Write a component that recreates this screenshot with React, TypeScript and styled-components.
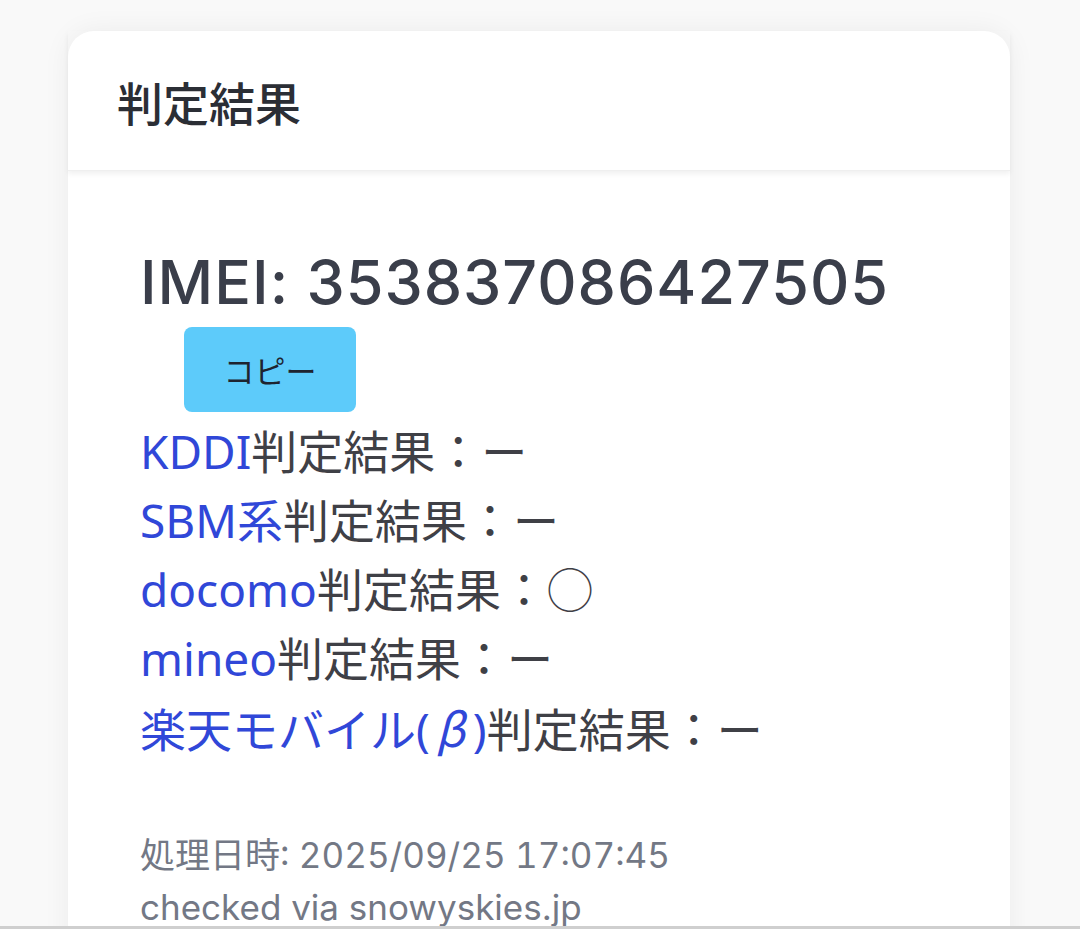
import React from 'react';
import styled, { createGlobalStyle } from 'styled-components';

interface Carrier {
  name: React.ReactNode;
  key: string;
  result: string;
}

const Greek = styled.span`
  font-family: "Noto Sans CJK JP", sans-serif;
  font-style: italic;
  padding: 0 8px 0 6px;
`;

const carriers: Carrier[] = [
  { key: 'kddi', name: 'KDDI', result: 'ー' },
  { key: 'sbm', name: 'SBM系', result: 'ー' },
  { key: 'docomo', name: 'docomo', result: '◯' },
  { key: 'mineo', name: 'mineo', result: 'ー' },
  {
    key: 'rakuten',
    name: (
      <>
        楽天モバイル(<Greek>β</Greek>)
      </>
    ),
    result: 'ー',
  },
];

const GlobalStyle = createGlobalStyle`
  html, body {
    margin: 0;
    padding: 0;
    background: #f9f9f9;
    font-family: "Noto Sans", "Noto Sans CJK JP", sans-serif;
  }
`;

const Page = styled.div`
  height: 929px;
  padding: 31px 0 0 68px;
  box-sizing: border-box;
  overflow: hidden;
`;

const Card = styled.section`
  width: 942px;
  background: #fff;
  border-radius: 26px 26px 0 0;
  box-shadow: 0 0 28px rgba(0, 0, 0, 0.06);
  min-height: 940px;
`;

const CardHeader = styled.header`
  height: 139px;
  display: flex;
  align-items: center;
  padding-left: 49px;
  box-shadow: 0 3px 5px rgba(0, 0, 0, 0.06);
  border-bottom: 1px solid #efefef;
  font-family: "Noto Sans CJK JP", sans-serif;
  font-size: 46px;
  font-weight: 500;
  color: #2b2e35;
`;

const CardBody = styled.div`
  padding: 76px 0 0 72px;
  color: #3d3d42;
`;

const Imei = styled.h2`
  margin: 0;
  font-family: Inter, "Noto Sans", sans-serif;
  font-size: 61px;
  font-weight: 500;
  line-height: 70px;
  letter-spacing: 1px;
  color: #3a3e4a;
`;

const CopyButton = styled.button`
  margin: 10px 0 5px 44px;
  width: 172px;
  height: 85px;
  border: none;
  border-radius: 8px;
  background: #5dcbfa;
  color: #1e2430;
  font-family: "Noto Sans CJK JP", sans-serif;
  font-size: 31px;
  font-weight: 400;
  display: block;
`;

const ResultList = styled.div`
  display: flex;
  flex-direction: column;
`;

const ResultRow = styled.div`
  font-family: "Noto Sans", "Noto Sans CJK JP", sans-serif;
  font-size: 46px;
  line-height: 69px;
  color: #3f4046;
`;

const CarrierName = styled.span`
  color: #3047d8;
`;

const Footer = styled.div`
  margin-top: 65px;
  font-family: Inter, "Noto Sans CJK JP", sans-serif;
  font-size: 35px;
  line-height: 52px;
  color: #737885;
`;

const FooterLine = styled.div<{ $tabular?: boolean }>`
  font-variant-numeric: ${(p) => (p.$tabular ? 'tabular-nums' : 'normal')};
`;

const BottomEdge = styled.div`
  position: fixed;
  left: 0;
  right: 0;
  bottom: 0;
  height: 3px;
  background: #cfcfcf;
`;

export default function App() {
  return (
    <>
      <GlobalStyle />
      <Page>
        <Card>
          <CardHeader>判定結果</CardHeader>
          <CardBody>
            <Imei>IMEI: 353837086427505</Imei>
            <CopyButton>コピー</CopyButton>
            <ResultList>
              {carriers.map((c) => (
                <ResultRow key={c.key}>
                  <CarrierName>{c.name}</CarrierName>判定結果：{c.result}
                </ResultRow>
              ))}
            </ResultList>
            <Footer>
              <FooterLine $tabular>処理日時: 2025/09/25 17:07:45</FooterLine>
              <FooterLine>checked via snowyskies.jp</FooterLine>
            </Footer>
          </CardBody>
        </Card>
      </Page>
      <BottomEdge />
    </>
  );
}
